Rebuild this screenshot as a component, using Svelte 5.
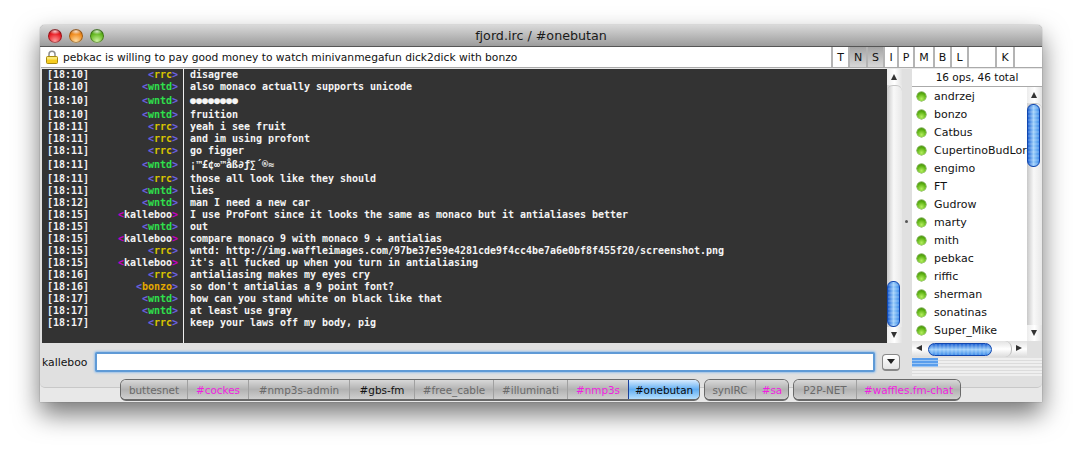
<script>
	const lines = [
		['18:10', 'rrc', 'disagree'],
		['18:10', 'wntd', 'also monaco actually supports unicode'],
		['18:10', 'wntd', '●●●●●●●●', true],
		['18:10', 'wntd', 'fruition'],
		['18:11', 'rrc', 'yeah i see fruit'],
		['18:11', 'rrc', 'and im using profont'],
		['18:11', 'rrc', 'go figger'],
		['18:11', 'wntd', '¡™£¢∞™åß∂ƒ∑´®≈', true],
		['18:11', 'rrc', 'those all look like they should'],
		['18:11', 'wntd', 'lies'],
		['18:12', 'wntd', 'man I need a new car'],
		['18:15', 'kalleboo', 'I use ProFont since it looks the same as monaco but it antialiases better'],
		['18:15', 'wntd', 'out'],
		['18:15', 'kalleboo', 'compare monaco 9 with monaco 9 + antialias'],
		['18:15', 'rrc', 'wntd: http://img.waffleimages.com/97be37e59e4281cde9f4cc4be7a6e0bf8f455f20/screenshot.png'],
		['18:15', 'kalleboo', "it's all fucked up when you turn in antialiasing"],
		['18:16', 'rrc', 'antialiasing makes my eyes cry'],
		['18:16', 'bonzo', "so don't antialias a 9 point font?"],
		['18:17', 'wntd', 'how can you stand white on black like that'],
		['18:17', 'wntd', 'at least use gray'],
		['18:17', 'rrc', 'keep your laws off my body, pig']
	];

	const flags = [
		['T', 17], ['N', 18, true], ['S', 17, true], ['I', 14], ['P', 16], ['M', 20], ['B', 17], ['L', 17], ['', 28], ['K', 18], ['', 29]
	];

	const users = ['andrzej', 'bonzo', 'Catbus', 'CupertinoBudLore', 'engimo', 'FT', 'Gudrow', 'marty', 'mith', 'pebkac', 'riffic', 'sherman', 'sonatinas', 'Super_Mike'];

	const tabGroups = [
		[
			['buttesnet', 'dim', 66], ['#cockes', 'hot', 61], ['#nmp3s-admin', 'dim', 101], ['#gbs-fm', 'plain', 65],
			['#free_cable', 'dim', 79], ['#illuminati', 'dim', 74], ['#nmp3s', 'hot', 61], ['#onebutan', 'active', 71]
		],
		[['synIRC', 'dim', 50], ['#sa', 'hot', 33]],
		[['P2P-NET', 'dim', 62], ['#waffles.fm-chat', 'hot', 104]]
	];
</script>

<div class="page">
	<div class="window">
		<header class="titlebar">
			<div class="lights">
				<span class="light red"></span>
				<span class="light amber"></span>
				<span class="light green"></span>
			</div>
			<span class="title">fjord.irc / #onebutan</span>
		</header>

		<div class="topicbar">
			<svg class="lock" width="12" height="14" viewBox="0 0 12 14">
				<path d="M3 7V4.2a3 3 0 0 1 6 0V7" fill="none" stroke="#8d8d8d" stroke-width="1.5" />
				<rect x="0.5" y="6.5" width="11" height="7" rx="1" fill="#f6cc1e" stroke="#a98a10" />
				<rect x="1" y="7" width="10" height="2.5" fill="#fbe873" />
			</svg>
			<span class="topic">pebkac is willing to pay good money to watch minivanmegafun dick2dick with bonzo</span>
			<div class="flags">
				{#each flags as [label, w, on]}
					<span class="flag" class:on style="width: {w}px">{label}</span>
				{/each}
			</div>
		</div>

		<div class="pane">
			<div class="main">
				<div class="log">
					{#each lines as [time, nick, text, tall]}
						<div class="row" class:tall>
							<span class="time">[{time}]</span>
							<span class="nick {nick}"><i>&lt;</i><b>{nick}</b><i>&gt;</i></span>
							<span class="msg">{text}</span>
						</div>
					{/each}
					<div class="row filler"><span></span><span></span><span class="msg"></span></div>
				</div>

				<div class="vscroll logscroll">
					<span class="arrow up"></span>
					<div class="track"><span class="thumb"></span></div>
					<span class="arrow down"></span>
				</div>

				<div class="splitter"><span class="dot"></span></div>

				<aside class="side">
					<div class="count">16 ops, 46 total</div>
					<div class="listwrap">
						<ul class="users">
							{#each users as name}
								<li><span class="ball"></span><span>{name}</span></li>
							{/each}
						</ul>
						<div class="vscroll userscroll">
							<span class="arrow up"></span>
							<div class="track"><span class="thumb"></span></div>
							<span class="arrow down"></span>
						</div>
					</div>
					<div class="hscroll">
						<span class="arrow left"></span>
						<div class="htrack"><span class="hthumb"></span></div>
						<span class="arrow right"></span>
					</div>
					<div class="meter"><span class="meterfill"></span></div>
					<div class="meter short"></div>
				</aside>
			</div>

			<div class="inputrow">
				<span class="me">kalleboo</span>
				<div class="field"></div>
				<span class="dropdown"><svg width="8" height="5" viewBox="0 0 8 5"><path d="M0 0h8L4 5z" fill="#222" /></svg></span>
			</div>
		</div>

		<nav class="tabs">
			{#each tabGroups as group}
				<div class="group">
					{#each group as [label, kind, w]}
						<span class="tab {kind}" style="width: {w}px">{label}</span>
					{/each}
				</div>
			{/each}
		</nav>
	</div>
</div>

<style>
	:global(body) {
		background: #fff;
	}

	.page {
		width: 1082px;
		height: 456px;
		padding: 25px 0 0 40px;
		box-sizing: border-box;
		overflow: hidden;
	}

	.window {
		width: 1002px;
		height: 377px;
		display: flex;
		flex-direction: column;
		background: #e8e8e8;
		border-radius: 5px 5px 0 0;
		box-shadow: 0 0 1px #444, 0 12px 26px rgba(0, 0, 0, 0.55);
		font-family: "DejaVu Sans", sans-serif;
		color: #111;
	}

	.titlebar {
		height: 22px;
		flex: none;
		display: flex;
		align-items: center;
		justify-content: center;
		position: relative;
		background: linear-gradient(#d9d9d9, #9c9c9c);
		border-radius: 5px 5px 0 0;
		border-bottom: 1px solid #555;
		box-sizing: border-box;
	}

	.lights {
		position: absolute;
		left: 8px;
		top: 4px;
		display: flex;
		gap: 7px;
	}

	.light {
		width: 14px;
		height: 14px;
		border-radius: 50%;
		box-shadow: inset 0 0 0 1px rgba(0, 0, 0, 0.35);
	}

	.red { background: radial-gradient(ellipse 40% 22% at 50% 18%, #ffffffc0, #fff0), radial-gradient(circle at 50% 85%, #ff9a9a, #e81c24 55%, #8e0a12); }
	.amber { background: radial-gradient(ellipse 40% 22% at 50% 18%, #ffffffc0, #fff0), radial-gradient(circle at 50% 85%, #ffdca0, #ef8a1c 55%, #a8570c); }
	.green { background: radial-gradient(ellipse 40% 22% at 50% 18%, #ffffffc0, #fff0), radial-gradient(circle at 50% 85%, #cdf5a0, #62b61e 55%, #2f7a10); }

	.title {
		font-size: 12.7px;
		color: #1a1a1a;
	}

	.topicbar {
		height: 21px;
		flex: none;
		box-sizing: border-box;
		margin-left: 1px;
		display: flex;
		align-items: center;
		background: #fff;
		border-bottom: 1px solid #aaa;
		padding-left: 5px;
	}

	.lock {
		flex: none;
		margin-right: 5px;
	}

	.topic {
		flex: 1;
		font-size: 10.7px;
		white-space: nowrap;
	}

	.flags {
		display: flex;
		align-self: stretch;
	}

	.flag {
		box-sizing: border-box;
		display: flex;
		align-items: center;
		justify-content: center;
		font-size: 11px;
		border-left: 2px solid #b4b4b4;
		background: #fff;
	}

	.flag.on {
		background: linear-gradient(#a4a4a4, #d8d8d8);
	}

	.pane {
		height: 319px;
		flex: none;
		box-sizing: border-box;
		margin-top: 1px;
		background: #e0e0e0;
		border-bottom: 1px solid #c8c8c8;
		border-radius: 0 0 5px 5px;
	}

	.main {
		height: 288px;
		display: flex;
	}

	.log {
		width: 845px;
		height: 274px;
		margin-left: 2px;
		flex: none;
		display: flex;
		flex-direction: column;
		background: #333;
		color: #f4f4f4;
		font-family: "DejaVu Sans Mono", monospace;
		font-size: 10px;
		font-weight: bold;
		letter-spacing: -0.02px;
		white-space: pre;
	}

	.row {
		height: 12px;
		line-height: 12px;
		flex: none;
		display: grid;
		grid-template-columns: 50px 76px 1fr;
		column-gap: 5px;
		padding-left: 5px;
	}

	.row.tall {
		height: 16px;
		line-height: 16px;
	}

	.row.filler {
		flex: 1;
	}

	.nick {
		text-align: right;
	}

	.nick i {
		font-style: normal;
		color: #6a60e0;
	}

	.rrc b { color: #d9c400; }
	.wntd b { color: #2fe04c; }
	.bonzo b { color: #e3a800; }
	.kalleboo b { color: #f2f2f2; }
	.kalleboo i { color: #c400c4; }

	.msg {
		border-left: 1px solid #eee;
		padding-left: 6px;
	}

	.vscroll {
		flex: none;
		width: 15px;
		display: flex;
		flex-direction: column;
		background: linear-gradient(90deg, #cfcfcf, #fafafa 40%, #e6e6e6);
	}

	.logscroll {
		height: 274px;
	}

	.arrow {
		flex: none;
		display: block;
		position: relative;
		height: 16px;
		width: 15px;
		background: linear-gradient(90deg, #ececec, #fff 50%, #e2e2e2);
	}

	.arrow::after {
		content: '';
		position: absolute;
		left: 4px;
		top: 5px;
		border-left: 3.5px solid transparent;
		border-right: 3.5px solid transparent;
	}

	.arrow.up::after {
		border-bottom: 6px solid #333;
	}

	.arrow.down::after {
		border-top: 6px solid #333;
	}

	.arrow.left::after,
	.arrow.right::after {
		left: 4px;
		top: 4px;
		border: none;
		border-top: 3.5px solid transparent;
		border-bottom: 3.5px solid transparent;
	}

	.arrow.left::after {
		border-right: 6px solid #333;
	}

	.arrow.right::after {
		border-left: 6px solid #333;
	}

	.track {
		flex: 1;
		display: flex;
		flex-direction: column;
		justify-content: flex-end;
		background: linear-gradient(90deg, #c8c8c8, #f8f8f8 45%, #e8e8e8);
		border-top: 1px solid #c4c4c4;
		border-radius: 6px 6px 0 0;
	}

	.thumb {
		display: block;
		margin: 0 2px 0 0;
		border-radius: 6px;
		border: 1px solid #1247ae;
		box-sizing: border-box;
		background: repeating-linear-gradient(#fff0 0 2px, #ffffff22 2px 4px), linear-gradient(90deg, #1f64d4, #9fd0fb 50%, #4290ea);
	}

	.logscroll .thumb {
		height: 46px;
	}

	.userscroll {
		height: 254px;
	}

	.userscroll .track {
		justify-content: flex-start;
	}

	.userscroll .thumb {
		height: 63px;
		flex: none;
	}

	.splitter {
		flex: none;
		width: 10px;
		position: relative;
	}

	.dot {
		position: absolute;
		left: 3px;
		top: 151px;
		width: 3px;
		height: 3px;
		border-radius: 50%;
		background: #555;
	}

	.side {
		flex: none;
		width: 130px;
		display: flex;
		flex-direction: column;
		height: 288px;
	}

	.count {
		height: 18px;
		flex: none;
		box-sizing: border-box;
		background: #fff;
		border-bottom: 1px solid #aaa;
		text-align: center;
		font-size: 10.5px;
		line-height: 17px;
	}

	.listwrap {
		height: 254px;
		flex: none;
		display: flex;
		overflow: hidden;
	}

	.users {
		flex: 1;
		min-width: 0;
		margin: 0;
		padding: 0;
		list-style: none;
		background: #fff;
	}

	.users li {
		height: 18px;
		display: flex;
		align-items: center;
		gap: 8px;
		padding-left: 5px;
		font-size: 11px;
		white-space: nowrap;
	}

	.ball {
		width: 9px;
		height: 9px;
		flex: none;
		border-radius: 50%;
		background: radial-gradient(circle at 50% 75%, #b5f060, #5bb011 60%, #3a7a08);
		box-shadow: 0 0 0 0.5px #4a8a10;
	}

	.hscroll {
		height: 16px;
		flex: none;
		display: flex;
		width: 115px;
		background: linear-gradient(#e2e2e2, #fff 50%, #dcdcdc);
	}

	.hscroll .arrow {
		height: 16px;
		background: none;
	}

	.htrack {
		flex: 1;
		display: flex;
		align-items: center;
		margin-left: 1px;
		border-radius: 0 7px 7px 0;
		border-right: 1px solid #bbb;
	}

	.hthumb {
		width: 64px;
		height: 13px;
		border-radius: 7px;
		border: 1px solid #1247ae;
		box-sizing: border-box;
		background: repeating-linear-gradient(90deg, #fff0 0 2px, #ffffff22 2px 4px), linear-gradient(#1f64d4, #9fd0fb 50%, #4290ea);
	}

	.meter {
		height: 9px;
		margin-top: 1px;
		flex: none;
		background: repeating-linear-gradient(#efefef 0 2px, #dcdcdc 2px 3px);
	}

	.meter.short {
		height: 8px;
	}

	.meterfill {
		display: block;
		width: 26px;
		height: 100%;
		background: repeating-linear-gradient(#5a9eec 0 2px, #9cc6f4 2px 3px);
	}

	.inputrow {
		height: 20px;
		margin-top: -5px;
		display: flex;
		align-items: center;
		position: relative;
		padding-left: 2px;
		width: 860px;
	}

	.me {
		width: 53px;
		font-size: 10.8px;
		flex: none;
	}

	.field {
		width: 780px;
		height: 20px;
		flex: none;
		box-sizing: border-box;
		background: #fff;
		border: 2px solid #5f9ad6;
		border-radius: 2px;
		box-shadow: 0 0 2px 1px #9cc3ea;
	}

	.dropdown {
		width: 18px;
		height: 17px;
		margin-left: 7px;
		flex: none;
		display: flex;
		align-items: center;
		justify-content: center;
		background: linear-gradient(#fff, #e4e4e4);
		border: 1px solid #888;
		border-bottom-width: 2px;
		border-radius: 4px;
		box-sizing: border-box;
	}

	.tabs {
		flex: none;
		height: 22px;
		margin-top: -9px;
		padding-left: 80px;
		display: flex;
		gap: 4px;
		position: relative;
	}

	.group {
		display: flex;
		height: 22px;
		box-sizing: border-box;
		border: 1px solid #6a6a6a;
		border-bottom-width: 2px;
		border-radius: 6px;
		overflow: hidden;
	}

	.tab {
		box-sizing: border-box;
		display: flex;
		align-items: center;
		justify-content: center;
		font-size: 10.4px;
		white-space: nowrap;
		background: linear-gradient(#d8d8d8, #b2b2b2 50%, #cfcfcf);
		border-left: 1px solid #a0a0a0;
	}

	.tab:first-child {
		border-left: none;
	}

	.dim { color: #6a6a6a; }
	.hot { color: #f01ee0; }
	.plain { color: #111; }

	.tab.active {
		color: #0a0a0a;
		background: linear-gradient(#d6ebff, #62aef2 50%, #b6e0ff);
		border-left: 1px solid #1b3f9a;
	}
</style>
